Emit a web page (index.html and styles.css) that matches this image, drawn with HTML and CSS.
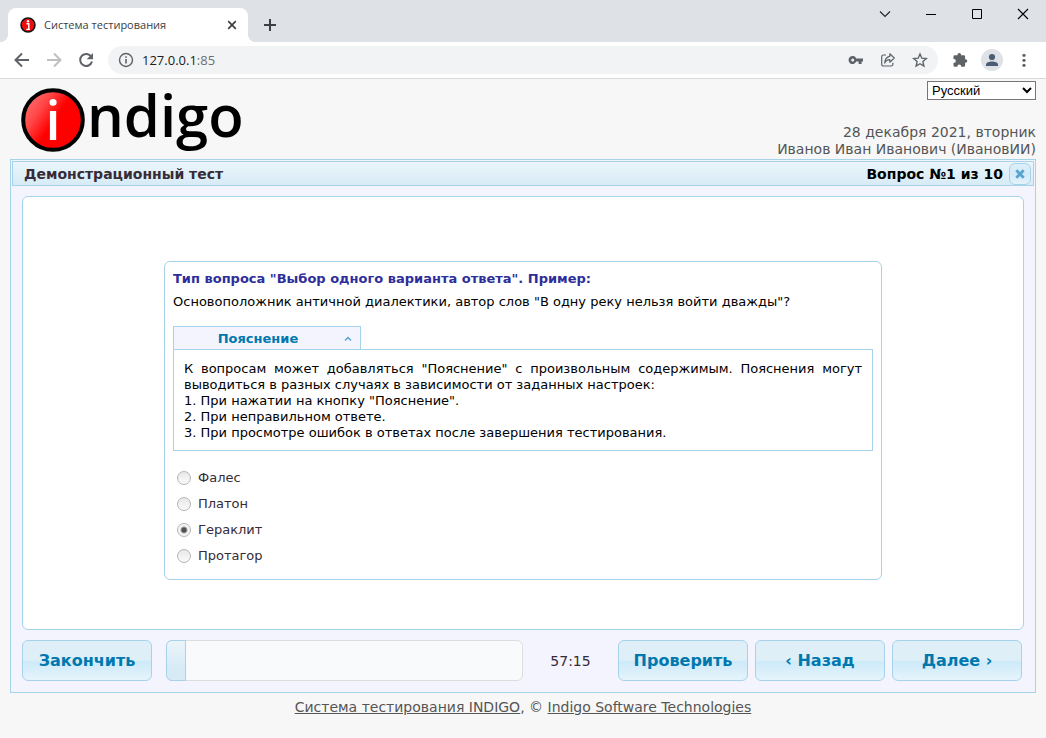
FILE: index.html
```html
<!DOCTYPE html>
<html lang="ru">
<head>
<meta charset="utf-8">
<title>Система тестирования</title>
<link rel="stylesheet" href="styles.css">
</head>
<body>
<div class="browser">
  <div class="tabstrip">
    <div class="tab">
      <svg class="favicon" viewBox="0 0 16 16" width="16" height="16" aria-hidden="true"><circle cx="8" cy="8" r="7" fill="#f00d0d" stroke="#111" stroke-width="1.5"/><circle cx="8" cy="4.3" r="1.2" fill="#fff"/><path d="M6.500 6.800h2.300v5.600M6.300 12.400h3.600" fill="none" stroke="#fff" stroke-width="1.400"/></svg>
      <span class="tab-title">Система тестирования</span>
      <button class="icon-btn" aria-label="Закрыть вкладку"><svg viewBox="0 0 16 16" width="16" height="16"><path d="M4.200 4.200l7.600 7.600M11.800 4.200l-7.600 7.600" stroke="#3c4043" stroke-width="1.700"/></svg></button>
    </div>
    <button class="icon-btn new-tab" aria-label="Новая вкладка"><svg viewBox="0 0 16 16" width="16" height="16"><path d="M8 2v12M2 8h12" stroke="#3c4043" stroke-width="2"/></svg></button>
    <div class="window-controls">
      <button class="icon-btn" aria-label="Поиск вкладок"><svg viewBox="0 0 16 16" width="16" height="16"><path d="M3 5.500l5 5 5-5" fill="none" stroke="#222" stroke-width="1.100"/></svg></button>
      <button class="icon-btn" aria-label="Свернуть"><svg viewBox="0 0 16 16" width="16" height="16"><path d="M3 8.500h10" stroke="#000"/></svg></button>
      <button class="icon-btn" aria-label="Развернуть"><svg viewBox="0 0 16 16" width="16" height="16"><path d="M3.500 3.500h9v9h-9z" fill="none" stroke="#000"/></svg></button>
      <button class="icon-btn" aria-label="Закрыть"><svg viewBox="0 0 16 16" width="16" height="16"><path d="M3 3l10 10M13 3L3 13" stroke="#000" stroke-width="1.100"/></svg></button>
    </div>
  </div>
  <div class="toolbar">
    <button class="icon-btn" aria-label="Назад"><svg viewBox="0 0 16 16" width="16" height="16"><path d="M15 8H2M8 1.500L1.500 8 8 14.500" fill="none" stroke="#5f6368" stroke-width="2"/></svg></button>
    <button class="icon-btn" aria-label="Вперёд"><svg viewBox="0 0 16 16" width="16" height="16"><path d="M1 8h13M8 1.500L14.500 8 8 14.500" fill="none" stroke="#bdbfc1" stroke-width="2"/></svg></button>
    <button class="icon-btn" aria-label="Обновить"><svg viewBox="0 0 16 16" width="16" height="16"><path d="M13.300 4.800A6 6 0 1 0 14 9.500" fill="none" stroke="#5f6368" stroke-width="2"/><path d="M15 1v6.300H8.700z" fill="#5f6368"/></svg></button>
    <div class="address">
      <svg viewBox="0 0 16 16" width="16" height="16" aria-hidden="true"><circle cx="8" cy="8" r="6.500" fill="none" stroke="#5f6368" stroke-width="1.400"/><path d="M8 7v4.500M8 4.200v1.600" stroke="#5f6368" stroke-width="1.600"/></svg>
      <span class="url">127.0.0.1<span class="port">:85</span></span>
      <button class="icon-btn" aria-label="Пароли"><svg viewBox="0 0 16 16" width="16" height="16"><path fill-rule="evenodd" d="M8.200 6.400H15V9.600H13.600V12H10.600V9.600H8.200A4 4 0 1 1 8.200 6.400zM4.700 6.500a1.500 1.500 0 1 0 0 3 1.500 1.500 0 0 0 0-3z" fill="#5f6368"/></svg></button>
      <button class="icon-btn" aria-label="Поделиться"><svg viewBox="0 0 16 16" width="16" height="16"><path d="M6 3H3.500A1.800 1.800 0 0 0 1.700 4.800v7.400A1.800 1.800 0 0 0 3.500 14h7.600a1.800 1.800 0 0 0 1.800-1.800V10.700M9.800 1.800L14.300 6l-4.500 4.200V7.700C7.400 7.700 5.800 8.800 4.700 11 4.900 7.200 6.700 4.800 9.800 4.300z" fill="none" stroke="#5f6368" stroke-width="1.200" stroke-linejoin="round"/></svg></button>
      <button class="icon-btn" aria-label="В закладки"><svg viewBox="0 0 16 16" width="16" height="16"><path d="M8 2l1.800 4.200 4.500.4-3.400 3 1 4.400L8 11.700 4.100 14l1-4.400-3.400-3 4.500-.4z" fill="none" stroke="#5f6368" stroke-width="1.400"/></svg></button>
    </div>
    <button class="icon-btn" aria-label="Расширения"><svg viewBox="0 0 16 16" width="16" height="16"><path d="M1.500 4.500A1.300 1.300 0 0 1 2.800 3.200H5.500V2.800a1.800 1.800 0 0 1 3.600 0v.4h2.700a1.300 1.300 0 0 1 1.300 1.300v2.700h.4a1.800 1.800 0 0 1 0 3.600h-.4v2.700a1.300 1.300 0 0 1-1.300 1.300H9.200v-.5a1.900 1.900 0 0 0-3.800 0v.5H2.800a1.300 1.300 0 0 1-1.300-1.300v-2.700h.4a1.900 1.900 0 0 0 0-3.800h-.4z" fill="#5f6368"/></svg></button>
    <button class="icon-btn avatar" aria-label="Профиль"><svg viewBox="0 0 16 16" width="16" height="16"><circle cx="8" cy="5" r="3.100" fill="#4a5d75"/><path d="M2 14v-1.300C2 10.500 5 9.500 8 9.500s6 1 6 3.200V14z" fill="#4a5d75"/></svg></button>
    <button class="icon-btn" aria-label="Меню"><svg viewBox="0 0 16 16" width="16" height="16" fill="#5f6368"><circle cx="8" cy="3.300" r="1.600"/><circle cx="8" cy="8.300" r="1.600"/><circle cx="8" cy="13.300" r="1.600"/></svg></button>
  </div>
</div>

<header class="site-header">
  <div class="logo">
    <svg class="logo-ball" viewBox="0 0 64 64" width="64" height="64" role="img" aria-label="i">
      <defs><linearGradient id="ball" x1="0" y1="0.150" x2="0.800" y2="0.700"><stop offset="0" stop-color="#ff7575"/><stop offset="0.350" stop-color="#ff4545"/><stop offset="0.650" stop-color="#f00"/></linearGradient></defs>
      <circle cx="32" cy="32" r="29.800" fill="url(#ball)" stroke="#000" stroke-width="4"/>
      <text class="logo-i" x="32" y="52" text-anchor="middle">i</text>
    </svg>
    <span class="logo-word">ndigo</span>
  </div>
  <div class="user-info">
    <select class="language" aria-label="Язык"><option>Русский</option></select>
    <div class="user-lines">
      <div>28 декабря 2021, вторник</div>
      <div>Иванов Иван Иванович (ИвановИИ)</div>
    </div>
  </div>
</header>

<main class="panel">
  <div class="title-bar">
    <h1 class="test-name">Демонстрационный тест</h1>
    <span class="counter">Вопрос №1 из 10</span>
    <button class="close" aria-label="Закрыть тест"><svg viewBox="0 0 16 16" width="16" height="16"><path d="M4.300 4.300l7.400 7.400M11.700 4.300l-7.400 7.400" stroke="#56a5d0" stroke-width="2.800"/></svg></button>
  </div>
  <div class="workspace">
    <section class="question">
      <h2 class="question-type">Тип вопроса "Выбор одного варианта ответа". Пример:</h2>
      <p class="question-text">Основоположник античной диалектики, автор слов "В одну реку нельзя войти дважды"?</p>
      <button class="hint-tab"><span class="hint-label">Пояснение</span><svg viewBox="0 0 8 6" width="8" height="6" aria-hidden="true"><path d="M1 4.500l3-3 3 3" fill="none" stroke="#56a5d0" stroke-width="1.500"/></svg></button>
      <div class="hint">
        <p class="hint-intro">К вопросам может добавляться "Пояснение" с произвольным содержимым. Пояснения могут выводиться в разных случаях в зависимости от заданных настроек:</p>
        <div>1. При нажатии на кнопку "Пояснение".</div>
        <div>2. При неправильном ответе.</div>
        <div>3. При просмотре ошибок в ответах после завершения тестирования.</div>
      </div>
      <div class="answers">
        <label class="answer"><input type="radio" name="answer">Фалес</label>
        <label class="answer"><input type="radio" name="answer">Платон</label>
        <label class="answer"><input type="radio" name="answer" checked>Гераклит</label>
        <label class="answer"><input type="radio" name="answer">Протагор</label>
      </div>
    </section>
  </div>
  <div class="actions">
    <button class="action">Закончить</button>
    <div class="progress" role="progressbar" aria-label="Ход теста" aria-valuenow="5" aria-valuemin="0" aria-valuemax="100"><div class="progress-value"></div></div>
    <span class="timer">57:15</span>
    <div class="nav">
      <button class="action">Проверить</button>
      <button class="action">‹ Назад</button>
      <button class="action">Далее ›</button>
    </div>
  </div>
</main>
<footer class="footer"><a href="#">Система тестирования INDIGO</a>, © <a href="#">Indigo Software Technologies</a></footer>
</body>
</html>
```

FILE: styles.css
```css
* { box-sizing: border-box; }
body {
  margin: 0;
  min-height: 100vh;
  background: #f7f7f7;
  color: #000;
  font: 13px/16px Verdana, "DejaVu Sans", sans-serif;
}
button { font-family: inherit; cursor: pointer; }
h1, h2, p { margin: 0; }
svg { display: block; flex: none; }

/* Browser frame */
.browser { border-bottom: 1px solid #dadada; background: #fff; }
.icon-btn { flex: none; padding: 0; border: 0; background: none; }
.tabstrip { display: flex; height: 42px; background: #dee1e6; padding-left: 8px; }
.tab {
  position: relative;
  display: flex;
  align-items: center;
  gap: 8px;
  width: 240px;
  margin-top: 8px;
  padding: 0 8px 0 12px;
  border-radius: 8px 8px 0 0;
  background: #fff;
}
.tab::before, .tab::after {
  content: "";
  position: absolute;
  bottom: 0;
  width: 8px;
  height: 8px;
}
.tab::before { left: -8px; background: radial-gradient(circle at 0 0, #dee1e6 8px, #fff 8px); }
.tab::after { right: -8px; background: radial-gradient(circle at 100% 0, #dee1e6 8px, #fff 8px); }
.tab-title { flex: 1; color: #3c4043; font: 11px/16px "Open Sans", sans-serif; }
.new-tab { margin: 8px 0 0 14px; }
.window-controls { display: flex; gap: 30px; height: 28px; margin-left: auto; padding-right: 15px; }
.toolbar { display: flex; align-items: center; gap: 16px; height: 36px; padding: 0 14px; }
.address {
  flex: 1;
  display: flex;
  align-items: center;
  gap: 16px;
  height: 28px;
  margin-left: -2px;
  margin-right: -2px;
  padding: 0 10px;
  border-radius: 14px;
  background: #f1f3f4;
}
.url { flex: 1; margin-left: -8px; color: #202124; font: 13px/20px "Open Sans", sans-serif; }
.port { color: #6b7075; }
.avatar { margin: 0 -3px; padding: 3px; border-radius: 50%; background: #dee1e6; }

/* Page header */
.site-header { display: flex; justify-content: space-between; height: 80px; padding: 2px 10px 0; }
.logo { display: flex; align-items: flex-start; gap: 2px; padding-left: 11px; }
.logo-ball { margin-top: 7px; overflow: visible; }
.logo-i { fill: #fff; font: 600 54px/60px "Open Sans", sans-serif; }
.logo-word { color: #000; font: 600 58px/68px "Open Sans", sans-serif; }
.user-info { display: flex; flex-direction: column; align-items: flex-end; color: #555; font-size: 14px; line-height: 17px; }
.user-lines { margin-top: 24px; text-align: right; }
.language {
  width: 109px;
  height: 19px;
  padding: 0;
  border: 1px solid #767676;
  border-radius: 0;
  background: #fff;
  color: #000;
  font: 13px "Liberation Sans", Arial, sans-serif;
}

/* Test panel */
.panel { margin: 0 10px; padding: 1px; border: 1px solid #a6d3ea; background: #f4f4ff; }
.title-bar {
  display: flex;
  align-items: center;
  height: 25px;
  padding: 0 2px 0 11px;
  border: 1px solid #a6d3ea;
  background: linear-gradient(#ebf5fa, #d7ebf6);
  font-size: 14px;
  font-weight: bold;
}
.test-name { flex: 1; color: #362b36; font-size: 14px; line-height: 16px; }
.close {
  display: flex;
  margin-left: 6px;
  padding: 2px;
  border: 1px solid #a6d3ea;
  border-radius: 6px;
  background: linear-gradient(#deeff8, #d2ebf8 50%, #e3f2fa);
}
.workspace {
  display: flex;
  justify-content: center;
  margin: 10px 10px 0;
  padding: 64px 20px 49px;
  border: 1px solid #a6d3ea;
  border-radius: 6px;
  background: #fff;
}
.question { width: 718px; padding: 9px 8px 10px; border: 1px solid #a6d3ea; border-radius: 6px; }
.question-type { color: #2e2e9a; font-size: 13px; line-height: 16px; }
.question-text { margin: 7px 0 16px; }
.hint-tab {
  display: flex;
  align-items: center;
  width: 188px;
  height: 24px;
  padding: 0 8px;
  border: 1px solid #a6d3ea;
  border-bottom: 0;
  background: #f4f4ff;
  color: #0078ae;
  font-size: 13px;
  font-weight: bold;
}
.hint-label { flex: 1; padding-right: 10px; }
.hint { margin-top: -1px; padding: 11px 10px 9px; border: 1px solid #a6d3ea; }
.hint-intro { text-align: justify; }
.answers { padding-top: 14px; }
.answer { display: flex; align-items: center; gap: 7px; height: 26px; padding-left: 4px; color: #362b36; }
.answer input {
  appearance: none;
  width: 14px;
  height: 14px;
  margin: 0;
  border: 1px solid #b5b5b5;
  border-radius: 50%;
  background: linear-gradient(#e8e8e8, #fafafa);
}
.answer input:checked { background: radial-gradient(circle, #505050 2px, #f4f4f4 4px); }

/* Bottom controls */
.actions { display: flex; align-items: center; padding: 10px 12px 10px 10px; }
.action {
  width: 130px;
  height: 41px;
  padding: 0;
  border: 1px solid #a6d3ea;
  border-radius: 6px;
  background: linear-gradient(#deeff8 48%, #cdeaf9 54%, #e6f4fb);
  color: #0078ae;
  font-size: 16px;
  font-weight: bold;
}
.progress { flex: 1; height: 41px; margin-left: 14px; border: 1px solid #dddddd; border-radius: 6px; background: #f9fafc; }
.progress-value {
  width: 20px;
  height: 41px;
  margin: -1px;
  border: 1px solid #a6d3ea;
  border-radius: 6px 0 0 6px;
  background: linear-gradient(#ebf5fa, #d7ebf6 70%);
}
.timer { width: 95px; color: #362b36; font-size: 14px; text-align: center; }
.nav { display: flex; gap: 7px; }
.footer { padding: 6px 10px; color: #555; font-size: 14px; line-height: 17px; text-align: center; }
.footer a { color: inherit; }
```
